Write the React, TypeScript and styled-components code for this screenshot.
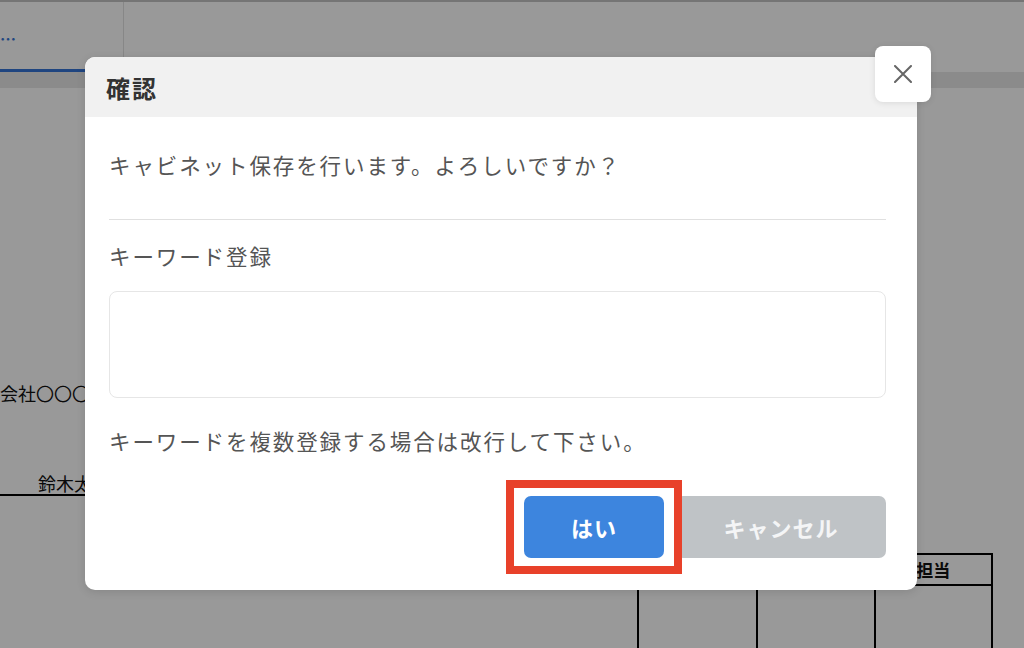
import styled, { createGlobalStyle } from "styled-components";

const GlobalStyle = createGlobalStyle`
  body {
    margin: 0;
    font-family: "Noto Sans CJK JP", "Noto Sans", sans-serif;
  }
`;

const Page = styled.div`
  position: relative;
  width: 1024px;
  height: 648px;
  overflow: hidden;
  background: #ffffff;
`;

const TabBar = styled.div`
  display: flex;
  height: 70px;
  border-top: 2px solid #c4c4c4;
`;

const Tab = styled.div<{ $active?: boolean }>`
  width: 124px;
  box-sizing: border-box;
  border-right: 1px solid #e2e2e2;
  border-bottom: 3px solid ${({ $active }) => ($active ? "#3474d6" : "transparent")};
  display: flex;
  align-items: center;
  color: #3474d6;
  font-size: 16px;
  font-weight: 700;
  letter-spacing: 1px;
  padding-top: 4px;
`;

const Band = styled.div`
  height: 16px;
  background: #e8e8e8;
`;

const DocBody = styled.div`
  display: flex;
  flex-direction: column;
  color: #111;
`;

const Company = styled.div`
  margin-top: 294px;
  font-size: 18px;
  line-height: 22px;
  white-space: nowrap;
`;

const Signer = styled.div`
  margin-top: 68px;
  width: 220px;
  padding-left: 38px;
  box-sizing: border-box;
  font-size: 18px;
  line-height: 22px;
  border-bottom: 2px solid #000;
`;

const StampTable = styled.div`
  margin: 57px 0 0 637px;
  width: 356px;
  display: grid;
  grid-template-columns: repeat(3, 1fr);
  grid-template-rows: 31px 120px;
  border: 2px solid #000;
  border-bottom: none;
  box-sizing: border-box;
`;

const StampCell = styled.div<{ $head?: boolean }>`
  border-left: 2px solid #000;
  border-bottom: ${({ $head }) => ($head ? "2px solid #000" : "none")};
  display: flex;
  align-items: center;
  justify-content: center;
  font-size: 17px;
  font-weight: 700;
  &:nth-child(3n + 1) {
    border-left: none;
  }
`;

const Overlay = styled.div`
  position: absolute;
  inset: 0;
  background: rgba(0, 0, 0, 0.4);
  padding: 57px 0 0 85px;
`;

const Dialog = styled.div`
  position: relative;
  width: 832px;
  height: 533px;
  background: #fff;
  border-radius: 10px;
  box-shadow: 0 2px 10px rgba(0, 0, 0, 0.12);
  display: flex;
  flex-direction: column;
`;

const Header = styled.div`
  height: 60px;
  background: #f1f1f1;
  border-radius: 10px 10px 0 0;
  display: flex;
  align-items: center;
  padding-left: 21px;
  font-size: 24px;
  font-weight: 700;
  color: #333;
  letter-spacing: 2px;
`;

const CloseButton = styled.button`
  position: absolute;
  left: 790px;
  top: -11px;
  width: 56px;
  height: 56px;
  border: none;
  border-radius: 8px;
  background: #fff;
  box-shadow: 0 1px 6px rgba(0, 0, 0, 0.1);
  display: flex;
  align-items: center;
  justify-content: center;
  padding: 0;
`;

const Content = styled.div`
  display: flex;
  flex-direction: column;
  padding: 34px 31px 0 24px;
  color: #555;
`;

const Text = styled.div<{ $mt?: number }>`
  margin-top: ${({ $mt }) => $mt ?? 0}px;
  font-size: 21.5px;
  line-height: 28px;
  letter-spacing: 1.9px;
`;

const Divider = styled.hr`
  margin: 40px 0 0;
  border: none;
  border-top: 1px solid #e0e0e0;
`;

const KeywordBox = styled.textarea`
  margin-top: 21px;
  height: 107px;
  box-sizing: border-box;
  border: 1px solid #e6e6e6;
  border-radius: 8px;
  resize: none;
  outline: none;
`;

const Actions = styled.div`
  margin-top: 41px;
  display: flex;
  justify-content: flex-end;
  gap: 12px;
`;

const Highlighted = styled.div`
  position: relative;
`;

const Marker = styled.div`
  position: absolute;
  left: -18px;
  right: -18px;
  top: -16px;
  bottom: -16px;
  border: 8px solid #e8412a;
  pointer-events: none;
`;

const ActionButton = styled.button<{ $primary?: boolean }>`
  width: ${({ $primary }) => ($primary ? 140 : 210)}px;
  height: 62px;
  border: none;
  border-radius: 7px;
  background: ${({ $primary }) => ($primary ? "#3d85de" : "#bfc3c6")};
  color: ${({ $primary }) => ($primary ? "#fff" : "#f4f5f6")};
  font-family: inherit;
  font-size: 22px;
  font-weight: 700;
  letter-spacing: 1px;
`;

export default function App() {
  return (
    <Page>
      <GlobalStyle />
      <TabBar>
        <Tab $active>…</Tab>
      </TabBar>
      <Band />
      <DocBody>
        <Company>会社〇〇〇〇</Company>
        <Signer>鈴木太郎</Signer>
        <StampTable>
          <StampCell $head>承認</StampCell>
          <StampCell $head>確認</StampCell>
          <StampCell $head>担当</StampCell>
          <StampCell />
          <StampCell />
          <StampCell />
        </StampTable>
      </DocBody>
      <Overlay>
        <Dialog>
          <Header>確認</Header>
          <CloseButton aria-label="閉じる">
            <svg width="18" height="18" viewBox="0 0 18 18">
              <path d="M1 1L17 17M17 1L1 17" stroke="#666" strokeWidth="2" strokeLinecap="round" />
            </svg>
          </CloseButton>
          <Content>
            <Text>キャビネット保存を行います。よろしいですか？</Text>
            <Divider />
            <Text $mt={22}>キーワード登録</Text>
            <KeywordBox />
            <Text $mt={29}>キーワードを複数登録する場合は改行して下さい。</Text>
            <Actions>
              <Highlighted>
                <ActionButton $primary>はい</ActionButton>
                <Marker />
              </Highlighted>
              <ActionButton>キャンセル</ActionButton>
            </Actions>
          </Content>
        </Dialog>
      </Overlay>
    </Page>
  );
}
